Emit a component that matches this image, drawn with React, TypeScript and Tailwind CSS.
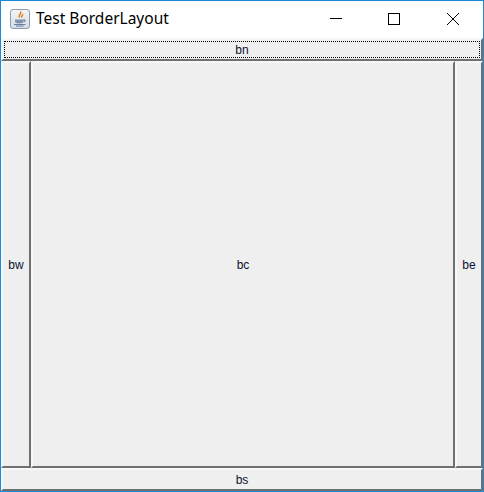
const Region = ({ label, focused, className }: { label: string; focused?: boolean; className: string }) => (
  <div className={`flex items-center justify-center bg-[#efefef] border-t-2 border-l-2 border-t-[#f7f7f7] border-l-[#f7f7f7] border-r-2 border-b-2 border-r-[#707070] border-b-[#707070] text-[12px] text-[#0c1230] ${className}`}>
    {focused ? (
      <div className="flex h-full w-full items-center justify-center border border-dotted border-black">{label}</div>
    ) : (
      label
    )}
  </div>
);

const JavaIcon = () => (
  <svg width="20" height="20" viewBox="0 0 20 20">
    <defs>
      <linearGradient id="iconBg" x1="0" y1="0" x2="0" y2="1">
        <stop offset="0" stopColor="#f4f4f2" />
        <stop offset="1" stopColor="#d6dde6" />
      </linearGradient>
    </defs>
    <rect x="0.5" y="0.5" width="19" height="19" rx="2.5" fill="url(#iconBg)" stroke="#8b9db3" />
    <path d="M10.500 2.500c1.800 2-2.500 3-1 6M12.500 5c.8 1.300-1.700 2-.7 3.500" fill="none" stroke="#e27a2c" strokeWidth="1.500" />
    <path d="M5 10.500h8.500v1.500c0 1.800-1.500 2.500-4.200 2.500S5 13.800 5 12z" fill="#7d93ae" />
    <path d="M13.500 10.800h1.500v1.700h-1.500M4 15.500h11.500M6 17h7.500" fill="none" stroke="#66809f" />
  </svg>
);

export default function App() {
  return (
    <div className="flex h-[492px] w-[484px] flex-col border border-[#1a8ad8] bg-white font-['Noto_Sans',sans-serif]">
      <div className="flex h-[37px] shrink-0 items-center">
        <div className="ml-[9px] mt-[-1px]">
          <JavaIcon />
        </div>
        <span className="ml-[6px] mt-[-1px] text-[15.5px] text-black">Test BorderLayout</span>
        <div className="ml-auto mr-[1px] mt-[-1px] flex">
          <div className="flex w-[59px] justify-center">
            <svg width="12" height="12" viewBox="0 0 12 12"><path d="M0 5.500h12" stroke="#000" /></svg>
          </div>
          <div className="flex w-[58px] justify-center">
            <svg width="12" height="12" viewBox="0 0 12 12"><rect x="0.500" y="0.500" width="11" height="11" fill="none" stroke="#000" /></svg>
          </div>
          <div className="flex w-[59px] justify-center">
            <svg width="12" height="12" viewBox="0 0 12 12"><path d="M0 0l12 12M12 0L0 12" stroke="#000" /></svg>
          </div>
        </div>
      </div>
      <div className="flex min-h-0 flex-1 flex-col bg-[#efefef] font-['Liberation_Sans',sans-serif]">
        <Region label="bn" focused className="h-[23px] p-[1px]" />
        <div className="flex min-h-0 flex-1">
          <Region label="bw" className="w-[30px]" />
          <Region label="bc" className="flex-1" />
          <Region label="be" className="w-[28px]" />
        </div>
        <Region label="bs" className="h-[23px]" />
      </div>
    </div>
  );
}
